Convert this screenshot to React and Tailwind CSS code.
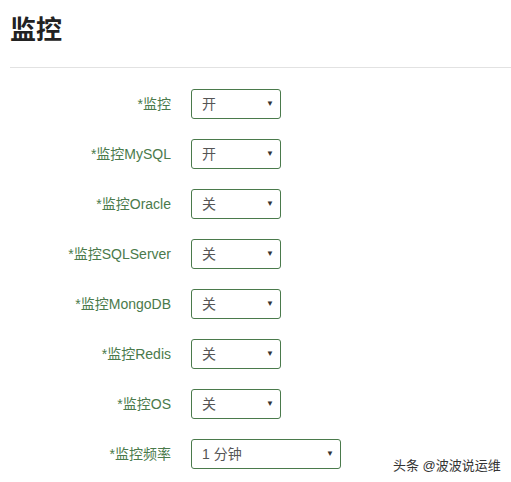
const rows = [
  { label: '*监控', value: '开', wide: false },
  { label: '*监控MySQL', value: '开', wide: false },
  { label: '*监控Oracle', value: '关', wide: false },
  { label: '*监控SQLServer', value: '关', wide: false },
  { label: '*监控MongoDB', value: '关', wide: false },
  { label: '*监控Redis', value: '关', wide: false },
  { label: '*监控OS', value: '关', wide: false },
  { label: '*监控频率', value: '1 分钟', wide: true },
];

export default function App() {
  return (
    <div
      className="relative w-[511px] h-[482px] overflow-hidden bg-white"
      style={{ fontFamily: '"Liberation Sans", Arial, "Noto Sans CJK SC", sans-serif' }}
    >
      <div className="pl-[10px]">
        <h1 className="pt-[13px] pb-[20px] text-[26px] leading-[34px] font-bold text-[#222]">监控</h1>
        <div className="border-t border-[#e2e2e2]" />
      </div>

      <div className="pt-[21px] flex flex-col gap-[20px]">
        {rows.map((r) => (
          <div key={r.label} className="flex items-center">
            <div className="w-[171px] text-right text-[14px] text-[#4a7a4b]">{r.label}</div>
            <div
              className={`ml-[20px] h-[30px] ${r.wide ? 'w-[150px]' : 'w-[90px]'} flex items-center justify-between pl-[10px] pr-[6px] border border-[#4a7a4b] rounded-[3px] text-[14px] text-[#555]`}
            >
              <span>{r.value}</span>
              <span className="text-[8px] text-[#333]">▼</span>
            </div>
          </div>
        ))}
      </div>

      <div className="absolute left-[393px] top-[456px] text-[13px] text-[#333]">头条 @波波说运维</div>
    </div>
  );
}
